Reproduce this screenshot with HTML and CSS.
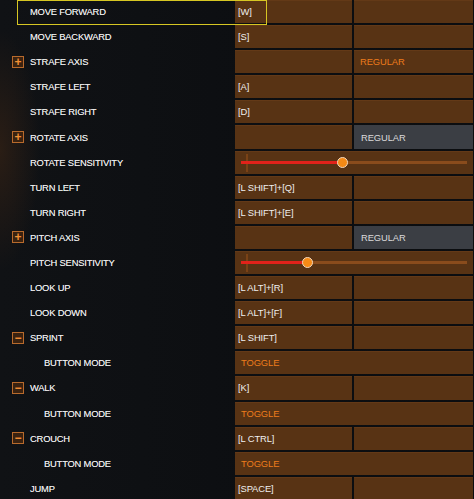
FILE: index.html
```html
<!DOCTYPE html>
<html>
<head>
<meta charset="utf-8">
<link rel="stylesheet" href="styles.css">
</head>
<body>
<div class="panel">
  <div class="table">
    <div class="label">MOVE FORWARD</div><div class="cell">[W]</div><div class="cell"></div>
    <div class="label">MOVE BACKWARD</div><div class="cell">[S]</div><div class="cell"></div>
    <div class="label"><span class="tog">+</span>STRAFE AXIS</div><div class="cell"></div><div class="cell orange">REGULAR</div>
    <div class="label">STRAFE LEFT</div><div class="cell">[A]</div><div class="cell"></div>
    <div class="label">STRAFE RIGHT</div><div class="cell">[D]</div><div class="cell"></div>
    <div class="label"><span class="tog">+</span>ROTATE AXIS</div><div class="cell"></div><div class="cell grey">REGULAR</div>
    <div class="label">ROTATE SENSITIVITY</div><div class="cell wide slider"><span class="tick"></span><span class="track"><span class="fill" style="width:101px"></span><span class="knob" style="left:101px"></span></span></div>
    <div class="label">TURN LEFT</div><div class="cell">[L SHIFT]+[Q]</div><div class="cell"></div>
    <div class="label">TURN RIGHT</div><div class="cell">[L SHIFT]+[E]</div><div class="cell"></div>
    <div class="label"><span class="tog">+</span>PITCH AXIS</div><div class="cell"></div><div class="cell grey">REGULAR</div>
    <div class="label">PITCH SENSITIVITY</div><div class="cell wide slider"><span class="tick"></span><span class="track"><span class="fill" style="width:66px"></span><span class="knob" style="left:66px"></span></span></div>
    <div class="label">LOOK UP</div><div class="cell">[L ALT]+[R]</div><div class="cell"></div>
    <div class="label">LOOK DOWN</div><div class="cell">[L ALT]+[F]</div><div class="cell"></div>
    <div class="label"><span class="tog minus">&minus;</span>SPRINT</div><div class="cell">[L SHIFT]</div><div class="cell"></div>
    <div class="label sub">BUTTON MODE</div><div class="cell wide orange">TOGGLE</div>
    <div class="label"><span class="tog minus">&minus;</span>WALK</div><div class="cell">[K]</div><div class="cell"></div>
    <div class="label sub">BUTTON MODE</div><div class="cell wide orange">TOGGLE</div>
    <div class="label"><span class="tog minus">&minus;</span>CROUCH</div><div class="cell">[L CTRL]</div><div class="cell"></div>
    <div class="label sub">BUTTON MODE</div><div class="cell wide orange">TOGGLE</div>
    <div class="label">JUMP</div><div class="cell">[SPACE]</div><div class="cell"></div>
  </div>
  <div class="focus"></div>
</div>
</body>
</html>
```
FILE: styles.css
```css
html, body {
  margin: 0;
  padding: 0;
  background: #0e1013;
}
body {
  width: 474px;
  height: 499px;
  overflow: hidden;
  font-family: "Liberation Sans", Arial, sans-serif;
  font-size: 9.4px;
  color: #eeeeee;
  background:
    radial-gradient(ellipse 40px 120px at 0px 150px, rgba(90,50,20,0.35), rgba(0,0,0,0)),
    linear-gradient(90deg, #101215 0%, #0c0e11 60%, #0b0d10 100%);
}
.panel {
  position: relative;
  width: 474px;
}
.table {
  display: grid;
  grid-template-columns: 233px 117px 119px;
  grid-auto-rows: 23.1px;
  column-gap: 2px;
  row-gap: 2px;
  width: 473px;
}
.label {
  display: flex;
  align-items: center;
  padding-left: 30px;
  letter-spacing: -0.2px;
  color: #eeeeee;
  text-shadow: 0 0 0.6px rgba(255,255,255,0.6);
}
.label.sub {
  padding-left: 44px;
}
.tog {
  display: flex;
  align-items: center;
  justify-content: center;
  box-sizing: border-box;
  width: 12px;
  height: 12px;
  margin-left: -18px;
  margin-right: 6px;
  border: 1px solid #b86a2c;
  background: #3a2210;
  color: #f29035;
  font-size: 12px;
  font-weight: bold;
  line-height: 1;
  text-shadow: none;
}
.cell {
  display: flex;
  align-items: center;
  padding-left: 3px;
  background-color: #583314;
  color: #f0f0f0;
  letter-spacing: -0.1px;
  box-shadow: inset 0 1px 0 rgba(120,70,30,0.35);
}
.cell.wide {
  grid-column: span 2;
}
.cell.orange {
  color: #ee7c1c;
  padding-left: 6px;
}
.cell.grey {
  background: #3b3e44;
  color: #dadada;
  padding-left: 7px;
  box-shadow: none;
}
.slider {
  position: relative;
  padding-left: 6px;
}
.tick {
  position: absolute;
  left: 11px;
  top: 3px;
  width: 2px;
  height: 18px;
  background: #7a4216;
}
.track {
  position: relative;
  display: block;
  width: 226px;
  height: 3px;
  background: #8a4c1c;
}
.fill {
  position: absolute;
  left: 0;
  top: 0;
  height: 3px;
  background: #e2221a;
}
.knob {
  position: absolute;
  top: -4px;
  width: 11px;
  height: 11px;
  margin-left: -5px;
  box-sizing: border-box;
  border-radius: 50%;
  background: #f58a16;
  border: 1.5px solid #f3d9c0;
}
.focus {
  position: absolute;
  left: 17px;
  top: 0;
  width: 250px;
  height: 25px;
  box-sizing: border-box;
  border: 1px solid #d6c623;
}
```
